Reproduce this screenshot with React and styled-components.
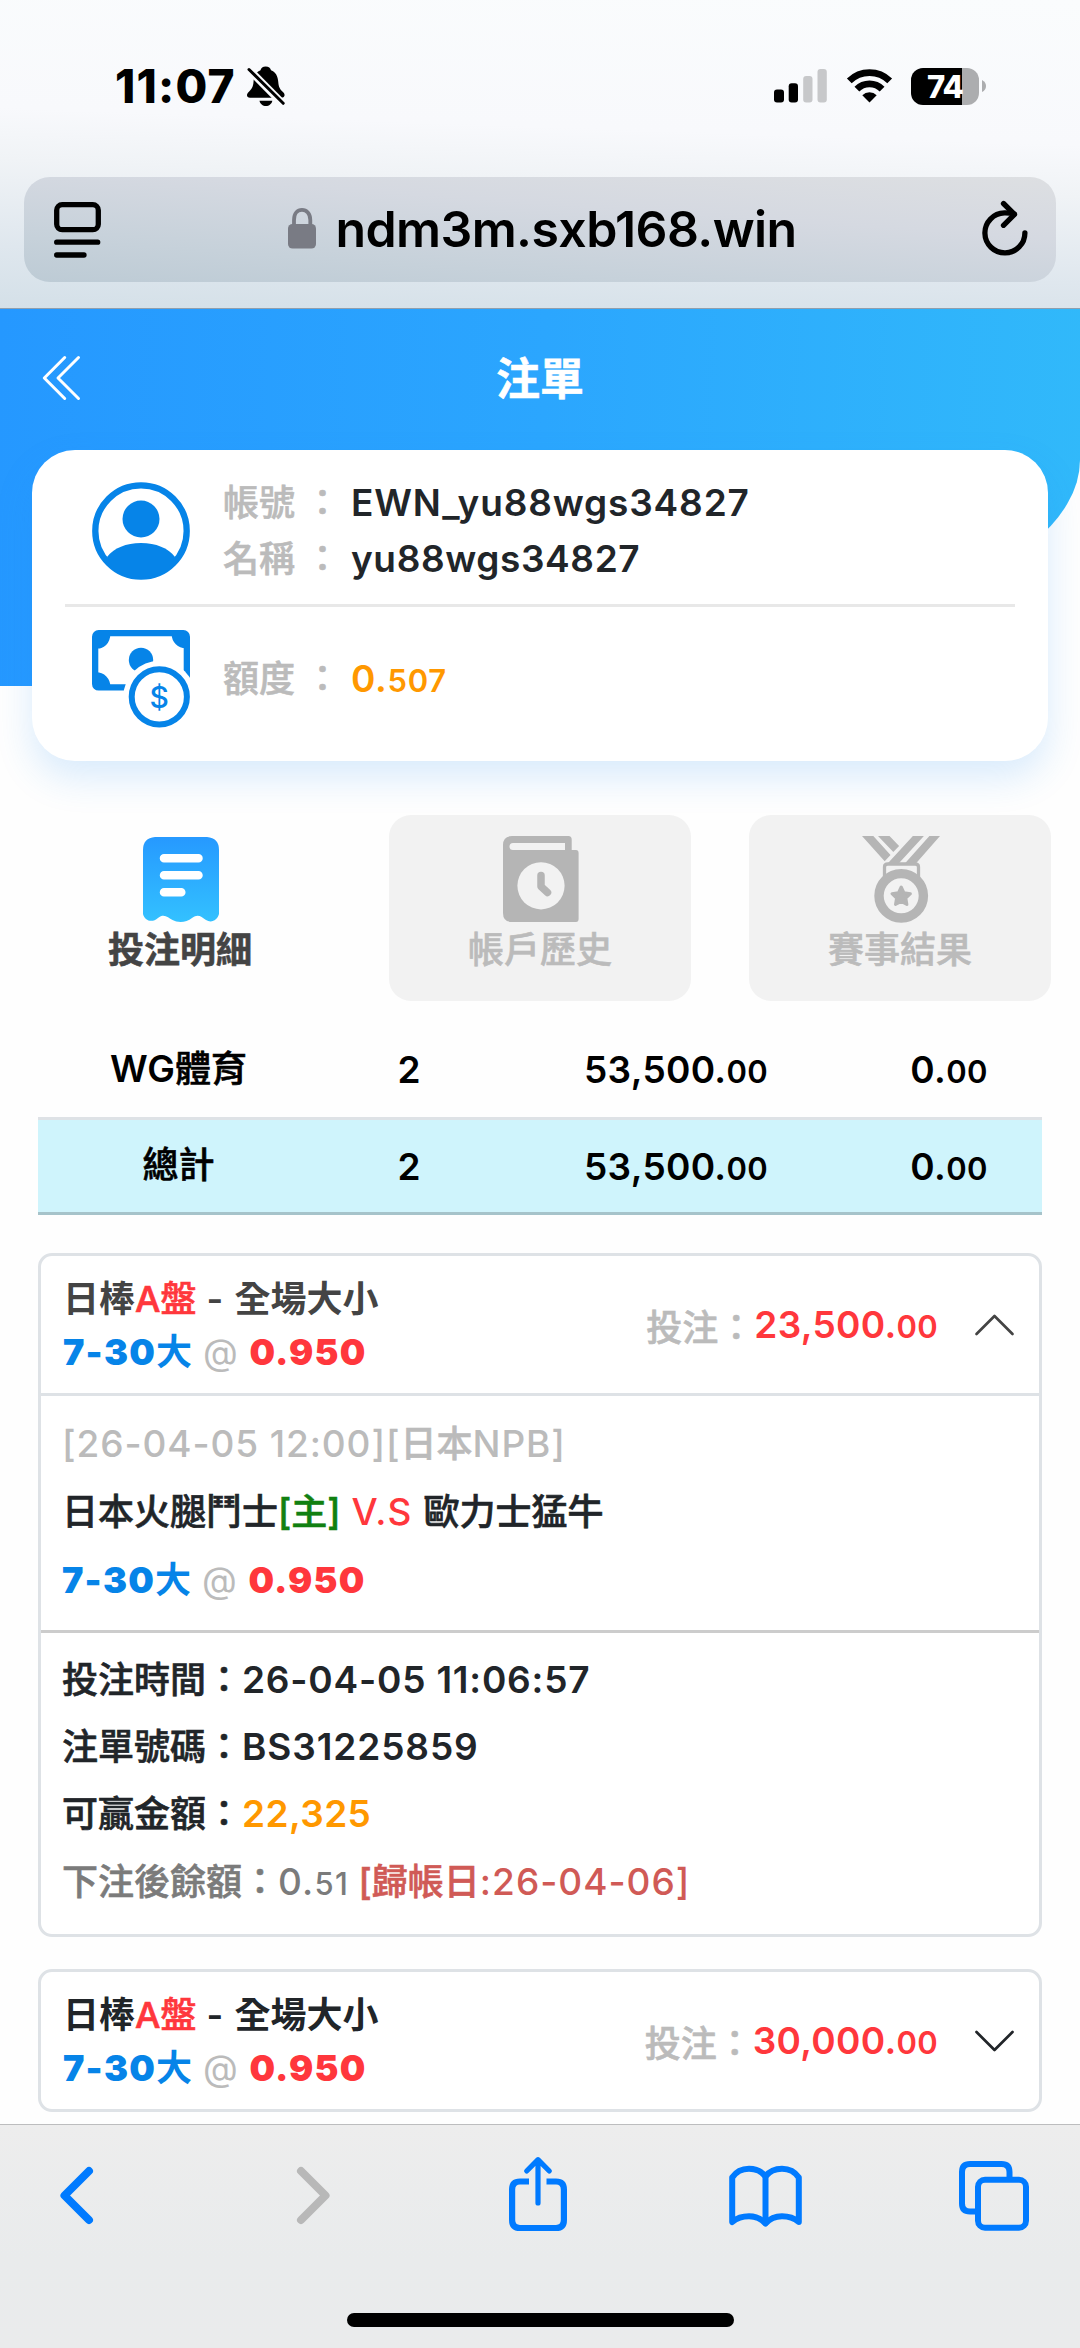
import React from "react";
import styled, { createGlobalStyle } from "styled-components";

const GlobalStyle = createGlobalStyle`
  * { box-sizing: border-box; }
  body {
    margin: 0;
    background: #fff;
    font-family: Inter, "Noto Sans CJK TC", "Liberation Sans", sans-serif;
    font-size: 36px;
    font-weight: 500;
    color: #212529;
  }
  svg { display: block; flex: none; overflow: visible; }
`;

const Screen = styled.div`
  width: 1080px;
  height: 2348px;
  display: flex;
  flex-direction: column;
  overflow: hidden;
  background: #fefefe;
`;

/* ---------- Browser top ---------- */

const BrowserTop = styled.header`
  flex: none;
  height: 309px;
  padding: 0 24px;
  display: flex;
  flex-direction: column;
  border-bottom: 1px solid #8f9fae;
  background: linear-gradient(182deg, #fafcfd 0%, #f8f9fc 42%, #f0f3f6 57%, #dfe7ee 82%, #d4e0e8 100%);
`;

const StatusBar = styled.div`
  height: 177px;
  padding: 0 70px 0 91px;
  display: flex;
  justify-content: space-between;
`;

const StatusGroup = styled.div`
  height: 172px;
  display: flex;
  align-items: center;
  gap: ${(p) => p.$gap}px;
`;

const Clock = styled.span`
  font-size: 46px;
  font-weight: 800;
  letter-spacing: 1.2px;
  color: #000;
`;

const Battery = styled.div`
  display: flex;
  align-items: center;
  gap: 3px;
`;

const BatteryBody = styled.div`
  width: 68px;
  height: 37px;
  border-radius: 12px;
  display: flex;
  align-items: center;
  justify-content: center;
  background: linear-gradient(90deg, #000 0 51px, #acadaf 51px);
  color: #fff;
  font-size: 31px;
  font-weight: 800;
  letter-spacing: -0.8px;
`;

const AddressBar = styled.div`
  height: 105px;
  padding: 0 28px 0 30px;
  border-radius: 26px;
  display: flex;
  align-items: center;
  justify-content: space-between;
  background: linear-gradient(184deg, #dddfe2 0%, #d5d9e1 35%, #c6d1da 75%, #bdcbd5 100%);
`;

const Address = styled.div`
  display: flex;
  align-items: center;
  gap: 19px;
  margin-left: 2px;
  padding-bottom: 2px;
  font-size: 50px;
  font-weight: 600;
  letter-spacing: -0.6px;
  color: #000;
`;

/* ---------- Page ---------- */

const Main = styled.main`
  flex: 1;
  min-height: 0;
  overflow: hidden;
  -webkit-text-stroke-width: 0.6px;
`;

const Hero = styled.section`
  position: relative;
  z-index: 0;
  &::before {
    content: "";
    position: absolute;
    z-index: -1;
    top: 0;
    left: 0;
    right: 0;
    height: 377px;
    border-bottom-right-radius: 670px 226px;
    background: linear-gradient(92deg, #2598ff 0%, #2ba6fe 50%, #31b9fa 100%);
  }
`;

const NavBar = styled.div`
  height: 141px;
  padding: 0 43px 2px;
  display: grid;
  grid-template-columns: 1fr auto 1fr;
  align-items: center;
  color: #fff;
`;

const Title = styled.h1`
  margin: 0;
  font-size: 44px;
  font-weight: 700;
  line-height: 60px;
`;

const ProfileCard = styled.div`
  height: 311px;
  margin: 0 32px;
  padding: 0 33px;
  border-radius: 43px;
  background: #fff;
  box-shadow: 0 17px 36px rgba(38, 145, 245, 0.17);
`;

const ProfileRow = styled.div`
  height: ${(p) => p.$h}px;
  padding: ${(p) => p.$pt || 0}px 27px 0;
  display: flex;
  align-items: center;
  gap: 33px;
  border-bottom: ${(p) => (p.$line ? "3px solid #e8e8e8" : "0")};
`;

const Fields = styled.div`
  display: flex;
  flex-direction: column;
`;

const Field = styled.div`
  display: flex;
  align-items: baseline;
  height: 56px;
  line-height: 56px;
`;

const FieldLabel = styled.span`
  width: 128px;
  color: #bbb;
  white-space: pre;
`;

const Ink = styled.span`
  color: ${(p) => p.$c || "inherit"};
  font-weight: ${(p) => p.$w || "inherit"};
  letter-spacing: ${(p) => p.$ls || 0}px;
  margin-left: ${(p) => p.$ml || 0}px;
  -webkit-text-stroke-width: ${(p) => (p.$w ? "0" : "inherit")};
`;

const Num = styled(Ink)`
  font-size: 37px;
  line-height: 1;
  font-weight: ${(p) => p.$w || 600};
  -webkit-text-stroke-width: 0;
`;

const Cents = styled.span`
  font-size: 31px;
`;

/* ---------- Tabs ---------- */

const Tabs = styled.nav`
  margin: 54px 29px 0;
  display: grid;
  grid-template-columns: repeat(3, 1fr);
  gap: 58px;
`;

const Tab = styled.div`
  height: 186px;
  padding-top: 20px;
  border-radius: 22px;
  display: flex;
  flex-direction: column;
  align-items: center;
  line-height: 54px;
  background: ${(p) => (p.$active ? "transparent" : "#f2f2f2")};
  color: ${(p) => (p.$active ? "#444" : "#bbb")};
  font-weight: ${(p) => (p.$active ? 700 : 500)};
  svg { margin-left: 2px; }
`;

/* ---------- Summary ---------- */

const Summary = styled.div`
  margin: 21px 38px 0;
`;

const SummaryRow = styled.div`
  display: grid;
  grid-template-columns: 281px 180px 354px 1fr;
  align-items: center;
  align-content: center;
  text-align: center;
  line-height: 52px;
  color: #000;
  height: ${(p) => (p.$total ? 98 : 95)}px;
  background: ${(p) => (p.$total ? "#cff4fc" : "transparent")};
  border-style: solid;
  border-width: ${(p) => (p.$total ? "3px 0" : 0)};
  border-color: #dee2e6 transparent #a6c3ca;
  > :first-child { padding-bottom: 2px; }
`;

/* ---------- Bets ---------- */

const Bets = styled.div`
  margin: 38px 38px 0;
  display: flex;
  flex-direction: column;
  gap: 32px;
`;

const BetCard = styled.article`
  border: 3px solid #dee2e6;
  border-radius: 14px;
  background: #fff;
`;

const BetHead = styled.div`
  height: 137px;
  padding: 0 25px 0 22px;
  display: flex;
  align-items: center;
  justify-content: space-between;
  color: ${(p) => (p.$open ? "#444" : "#212529")};
`;

const BetName = styled.div`
  padding-top: 3px;
  line-height: 53.5px;
  white-space: pre;
`;

const Stake = styled.div`
  display: flex;
  align-items: center;
`;

const BetBlock = styled.div`
  height: ${(p) => p.$h}px;
  padding: 14px 21px 0;
  line-height: ${(p) => p.$lh}px;
  border-top: 3px solid ${(p) => p.$line};
  white-space: pre;
`;

/* ---------- Browser bottom ---------- */

const BrowserBottom = styled.footer`
  flex: none;
  height: 224px;
  border-top: 1px solid #bcbdbe;
  background: linear-gradient(180deg, #ededed, #e9ebec 60%, #eaebec);
  display: flex;
  flex-direction: column;
  align-items: center;
  justify-content: space-between;
  padding-bottom: 21px;
`;

const Toolbar = styled.div`
  width: 100%;
  height: 141px;
  padding: 0 51px 0 60px;
  display: grid;
  grid-template-columns: 237px 212px 220px 230px 70px;
  align-items: center;
  color: #007aff;
`;

const HomeIndicator = styled.div`
  width: 387px;
  height: 14px;
  border-radius: 7px;
  background: #000;
`;

/* ---------- Icons ---------- */

const BellOff = () => (
  <svg width="38" height="40" viewBox="0 0 38 40">
    <path d="M18.7 .6c3 0 4.800 1.600 5.300 3.600 4.700 1.700 6.800 5.800 7.300 12 .3 5 2 7.300 4.600 9.700 3 2.700 1.700 5.800-1.400 5.800H3c-3.200 0-4.200-3-1.300-5.800C4.300 23.500 6.200 21 6.500 16c.4-6.200 2.500-10.200 7-11.800C14 2.200 15.700.6 18.700.6z" fill="#000" />
    <path d="M12.500 34.700h12.800c-.6 3.200-3.200 5.300-6.400 5.300s-5.800-2.100-6.400-5.300z" fill="#000" />
    <path d="M-1 .5L36 38" stroke="#f9fafc" strokeWidth="7.500" />
    <path d="M2 3.500L36.200 37.300" stroke="#000" strokeWidth="3" strokeLinecap="round" />
  </svg>
);

const Signal = () => (
  <svg width="53" height="34" viewBox="0 0 53 34">
    <rect x="0" y="20.500" width="10" height="13" rx="3" />
    <rect x="14.700" y="14.200" width="9.300" height="19.300" rx="3" />
    <rect x="29.200" y="7" width="9.300" height="26.500" rx="3" fill="#c7c8ca" />
    <rect x="43.500" y="0" width="9.300" height="33.500" rx="3" fill="#c7c8ca" />
  </svg>
);

const Wifi = () => (
  <svg width="45" height="34" viewBox="0 0 45 34">
    <g fill="none" stroke="#000" strokeWidth="6.800">
      <path d="M2.300 11.900A28.800 28.800 0 0 1 42.700 11.900" />
      <path d="M9.900 20.200A17.800 17.800 0 0 1 35.100 20.200" />
    </g>
    <path d="M22.500 33.500l-7.200-7.300a10 10 0 0 1 14.400 0z" />
  </svg>
);

const PageMenu = () => (
  <svg width="47" height="56" viewBox="0 0 47 56" fill="none" stroke="#000" strokeWidth="5.300" strokeLinecap="round">
    <rect x="2.700" y="2.700" width="41.600" height="25" rx="5.500" />
    <path d="M2.700 40.200H43.700M2.700 53H30" />
  </svg>
);

const Lock = () => (
  <svg width="28" height="41" viewBox="0 0 28 41">
    <path d="M6 18V12C6 5.500 9.500 1.900 14 1.900S22.300 5.500 22.300 12v6" fill="none" stroke="#797b84" strokeWidth="3.800" />
    <rect x="0" y="16" width="28" height="24.500" rx="4.500" fill="#797b84" />
  </svg>
);

const Reload = () => (
  <svg width="46" height="58" viewBox="0 0 46 58" fill="none" stroke="#000" strokeWidth="5.300" strokeLinecap="round" strokeLinejoin="round">
    <path d="M42.900 31.800A20 20 0 1 1 22.400 11.900Q28 11.800 32.300 13" />
    <path d="M21.500 2.500L32.500 13.300L21.500 24.300" />
  </svg>
);

const DoubleBack = () => (
  <svg width="37" height="45" viewBox="0 0 37 45" fill="none" stroke="#fff" strokeWidth="3" strokeLinecap="round" strokeLinejoin="round">
    <path d="M21.700 1.500L1.300 22L21.700 42.500M35.500 1.500L15 22L35.500 42.500" />
  </svg>
);

const Avatar = () => (
  <svg width="98" height="98" viewBox="0 0 98 98" fill="#0684e8">
    <circle cx="49" cy="49" r="45.700" fill="none" stroke="#0684e8" strokeWidth="6.300" />
    <circle cx="49" cy="37" r="18.500" />
    <path d="M15 75C22 66 34 61 49 61S76 66 83 75C78 88 64 95 49 95S20 88 15 75Z" />
  </svg>
);

const Money = () => (
  <svg width="98" height="98" viewBox="0 0 98 98" fill="#0684e8">
    <rect x="3.150" y="3.150" width="91.700" height="54.300" rx="3.500" fill="none" stroke="#0684e8" strokeWidth="6.300" />
    <path d="M4 4H18.300A12.300 14 0 0 1 4 18.300ZM94 4V18.300A14 14 0 0 1 79.700 4ZM4 42.300A14 14 0 0 1 18.300 57H4Z" />
    <circle cx="49" cy="30" r="12.200" />
    <circle cx="67.300" cy="66.800" r="36" fill="#fff" />
    <circle cx="67.300" cy="66.800" r="27.600" fill="none" stroke="#0684e8" strokeWidth="6" />
    <text x="67.300" y="77.500" fontSize="30" fontWeight="500" textAnchor="middle">$</text>
  </svg>
);

const Receipt = () => (
  <svg width="76" height="88" viewBox="0 -2 76 88">
    <defs>
      <linearGradient id="receipt" x1="0" y1="0" x2="0" y2="1">
        <stop offset="0" stopColor="#2699ff" />
        <stop offset="1" stopColor="#33c1ff" />
      </linearGradient>
    </defs>
    <path d="M12 0H64Q76 1 76 13V77C74.500 83 68.500 86.500 63 83C58 79.500 55 76.500 49 81C43.500 85.600 35 86 29.500 83C25 80.500 21 76 15 81C9 86.500 1.500 83.500 0 77V13Q0 1 12 0Z" fill="url(#receipt)" />
    <path d="M21 21.300H55.500M21 38.200H55.500M21 55.200H38.300" stroke="#fff" strokeWidth="8.500" strokeLinecap="round" />
  </svg>
);

const History = () => (
  <svg width="76" height="88" viewBox="0 -1 76 88">
    <path d="M9 0H65.500Q68.700 0 68.700 3.500V14H73Q75.600 14 75.600 17V83Q75.600 86 73 86H9Q0 86 0 77V9Q0 0 9 0Z" fill="#b5b5b5" />
    <path d="M10 7H62V14H10A3.500 3.500 0 0 1 10 7Z" fill="#f2f2f2" />
    <circle cx="38" cy="49.800" r="23.600" fill="#f2f2f2" />
    <path d="M38 39.500V50.500L44.500 56.500" fill="none" stroke="#b5b5b5" strokeWidth="7.500" strokeLinecap="round" strokeLinejoin="round" />
  </svg>
);

const Medal = () => (
  <svg width="78" height="88" viewBox="0 -1 78 88" fill="#b5b5b5">
    <path d="M0 0H11.300L28.500 19L22.700 25.300ZM16 0H27.500L37.100 10L31.300 16ZM50.900 0H61.900L37.100 27H26.100ZM67.400 0H78L54.300 27H43.300Z" />
    <path d="M22.500 42V31Q22.500 28 26 28H53Q56.500 28 56.500 31V42" fill="none" stroke="#b5b5b5" strokeWidth="3.300" />
    <circle cx="39.200" cy="59.800" r="22.200" fill="#f2f2f2" stroke="#b5b5b5" strokeWidth="9.400" />
    <path d="M39.200 51L42 56.800L48.400 57.700L43.800 62.100L44.900 68.400L39.200 65.400L33.500 68.400L34.600 62.100L30 57.700L36.400 56.800Z" stroke="#b5b5b5" strokeWidth="3" strokeLinejoin="round" />
  </svg>
);

const Chevron = ({ up }) => (
  <svg width="39" height="22" viewBox="0 0 39 22" fill="none" stroke={up ? "#444" : "#212529"} strokeWidth="2.700" strokeLinecap="round" strokeLinejoin="round">
    <path d={up ? "M1.500 20L19.500 2L37.500 20" : "M1.500 2L19.500 20L37.500 2"} />
  </svg>
);

const ArrowIcon = ({ forward }) => (
  <svg width="33" height="57" viewBox="0 0 33 57" fill="none" stroke={forward ? "#b8b8b8" : "#007aff"} strokeWidth="8" strokeLinecap="round" strokeLinejoin="round">
    <path d={forward ? "M4 4L28.500 28.500L4 53" : "M29 4L4.500 28.500L29 53"} />
  </svg>
);

const Share = () => (
  <svg width="58" height="78" viewBox="0 0 58 78" fill="none" stroke="currentColor" strokeWidth="6.200">
    <path d="M20 24.500H11Q3.100 24.500 3.100 32.500V63Q3.100 71 11 71H47Q54.900 71 54.900 63V32.500Q54.900 24.500 47 24.500H37.500" />
    <path d="M29 46V3.500M17.700 14L29 2.700L40.300 14" strokeWidth="5.200" strokeLinecap="round" strokeLinejoin="round" />
  </svg>
);

const Book = () => (
  <svg width="73" height="62" viewBox="0 0 73 62" fill="none" stroke="currentColor" strokeWidth="6" strokeLinecap="round" strokeLinejoin="round">
    <path d="M3.200 12.500Q9 3.700 20 3.700Q30.500 3.700 36.500 11.300Q42.500 3.700 53 3.700Q64 3.700 69.800 12.500V57Q63 51.300 53 51.300Q43 51.300 36.500 58.500Q30 51.300 20 51.300Q10 51.300 3.200 57Z" />
    <path d="M36.500 12V58" />
  </svg>
);

const TabsIcon = () => (
  <svg width="70" height="70" viewBox="0 0 70 70" fill="none" stroke="currentColor" strokeWidth="6">
    <path d="M16.500 50.500H11Q3 50.500 3 42.500V11Q3 3 11 3H42.500Q50.500 3 50.500 11V16" />
    <rect x="19" y="18.700" width="48" height="48" rx="7" />
  </svg>
);

/* ---------- Pieces ---------- */

const Amount = ({ whole, cents, c, w, ls = 0.3, ml }) => (
  <Num $c={c} $w={w} $ls={ls} $ml={ml}>
    {whole}.<Cents>{cents}</Cents>
  </Num>
);

const Pick = () => (
  <div>
    <Ink $c="#0684e8" $w={900} $ls={1.2}>7-30</Ink>
    <Ink $c="#0684e8" $w={700}>大</Ink>
    <Ink $c="#bbb" $w={400} $ls={0.8}> @ </Ink>
    <Ink $c="#ff373c" $w={900} $ls={1.2}>0.950</Ink>
  </div>
);

const BetHeader = ({ open, whole }) => (
  <BetHead $open={open}>
    <BetName>
      <div><Ink $w={600}>日棒</Ink><Ink $c="#ff373c">A盤</Ink><Ink $w={600} $ls={1}> - </Ink><Ink $w={600}>全場大小</Ink></div>
      <Pick />
    </BetName>
    <Stake>
      <Ink $c="#bbb">投注：</Ink>
      <Amount whole={whole} cents="00" c="#ff373c" />
      <Ink $ml={37}><Chevron up={open} /></Ink>
    </Stake>
  </BetHead>
);

const rows = [
  { name: <><Num>WG</Num>體育</>, total: false },
  { name: "總計", total: true },
];

export default function App() {
  return (
    <Screen>
      <GlobalStyle />
      <BrowserTop>
        <StatusBar>
          <StatusGroup $gap={11}>
            <Clock>11:07</Clock>
            <BellOff />
          </StatusGroup>
          <StatusGroup $gap={19.5}>
            <Signal />
            <Wifi />
            <Battery>
              <BatteryBody>74</BatteryBody>
              <svg width="4" height="12" viewBox="0 0 4 12"><path d="M0 0Q4 2 4 6T0 12Z" fill="#acadaf" /></svg>
            </Battery>
          </StatusGroup>
        </StatusBar>
        <AddressBar>
          <PageMenu />
          <Address>
            <Lock />
            <span>ndm3m.sxb168.win</span>
          </Address>
          <Reload />
        </AddressBar>
      </BrowserTop>

      <Main>
        <Hero>
          <NavBar>
            <DoubleBack />
            <Title>注單</Title>
            <span />
          </NavBar>
          <ProfileCard>
            <ProfileRow $h={157} $pt={8} $line>
              <Avatar />
              <Fields>
                <Field>
                  <FieldLabel>帳號 ：</FieldLabel>
                  <Num $ls={0.85}>EWN_yu88wgs34827</Num>
                </Field>
                <Field>
                  <FieldLabel>名稱 ：</FieldLabel>
                  <Num $ls={0.6}>yu88wgs34827</Num>
                </Field>
              </Fields>
            </ProfileRow>
            <ProfileRow $h={143}>
              <Money />
              <Field>
                <FieldLabel>額度 ：</FieldLabel>
                <Amount whole="0" cents="507" c="#ff9800" ls={0.7} />
              </Field>
            </ProfileRow>
          </ProfileCard>
        </Hero>

        <Tabs>
          <Tab $active><Receipt />投注明細</Tab>
          <Tab><History />帳戶歷史</Tab>
          <Tab><Medal />賽事結果</Tab>
        </Tabs>

        <Summary>
          {rows.map((r) => (
            <SummaryRow key={String(r.total)} $total={r.total}>
              <span>{r.name}</span>
              <Num>2</Num>
              <Amount whole="53,500" cents="00" />
              <Amount whole="0" cents="00" ml={3} />
            </SummaryRow>
          ))}
        </Summary>

        <Bets>
          <BetCard>
            <BetHeader open whole="23,500" />
            <BetBlock $h={237} $lh={68} $line="#dee2e6">
              <Ink as="div" $c="#bbb"><Num $w={500} $ls={0.9}>[26-04-05 12:00][</Num>日本<Num $w={500} $ls={0.9}>NPB]</Num></Ink>
              <div>日本火腿鬥士<Ink $c="#118011">[主]</Ink><Num $c="#ff373c" $w={500} $ls={1.1}> V.S </Num>歐力士猛牛</div>
              <Pick />
            </BetBlock>
            <BetBlock $h={304} $lh={67.2} $line="#ccc">
              <div>投注時間：<Num $ls={0.8}>26-04-05 11:06:57</Num></div>
              <div>注單號碼：<Num $ls={0.9}>BS31225859</Num></div>
              <div>可贏金額：<Num $c="#ff9800" $ls={0.4}>22,325</Num></div>
              <Ink as="div" $c="#7b7b7b">下注後餘額：<Amount whole="0" cents="51" w={500} ls={1.2} /> <Ink $c="#d05a56">[歸帳日<Num $w={500} $ls={1}>:26-04-06]</Num></Ink></Ink>
            </BetBlock>
          </BetCard>
          <BetCard>
            <BetHeader whole="30,000" />
          </BetCard>
        </Bets>
      </Main>

      <BrowserBottom>
        <Toolbar>
          <ArrowIcon />
          <ArrowIcon forward />
          <Share />
          <Book />
          <TabsIcon />
        </Toolbar>
        <HomeIndicator />
      </BrowserBottom>
    </Screen>
  );
}
